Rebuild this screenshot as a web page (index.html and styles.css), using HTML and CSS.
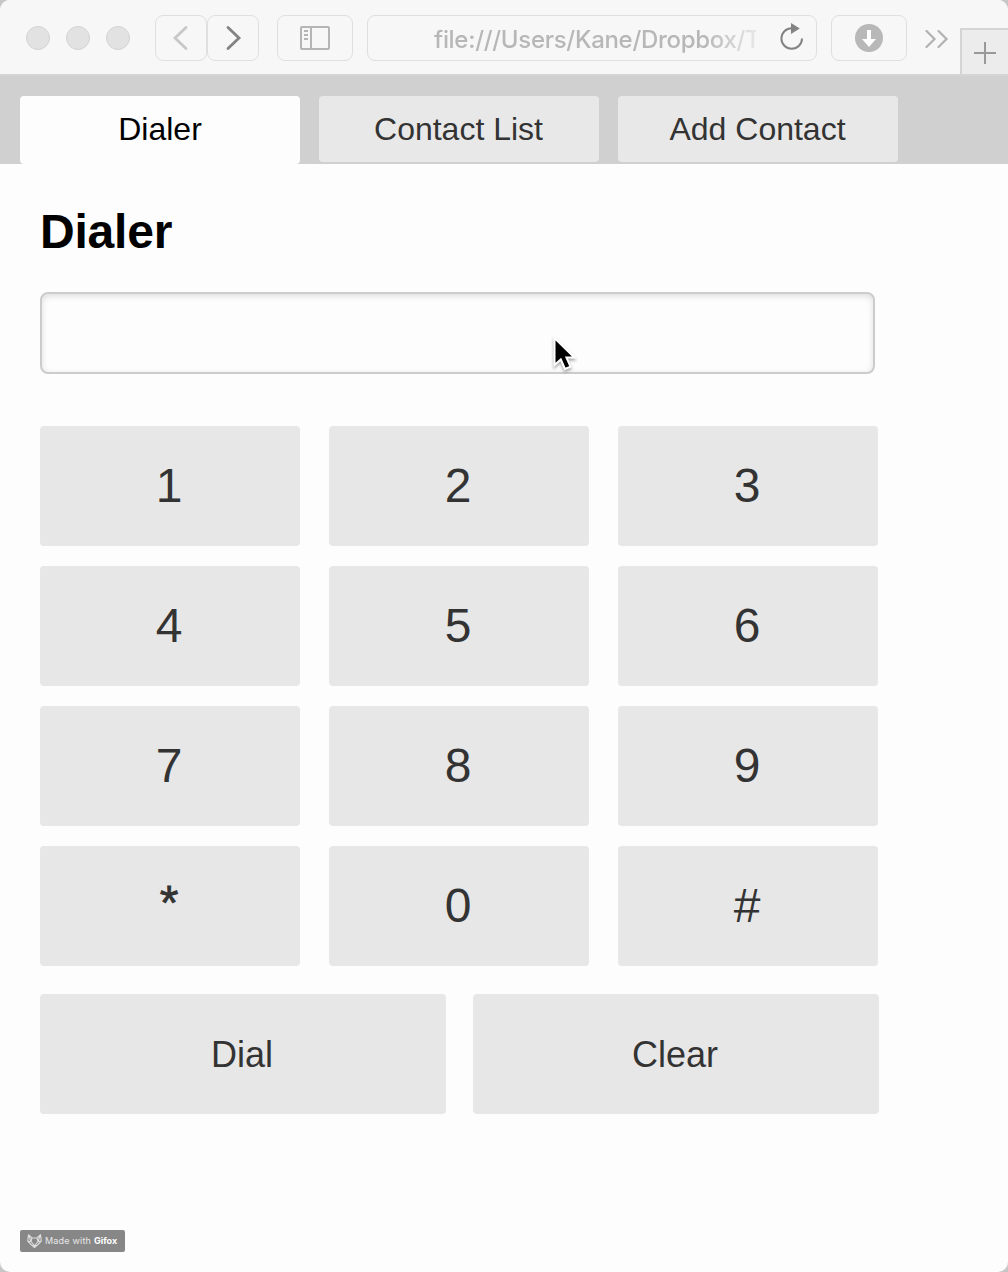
FILE: index.html
```html
<!DOCTYPE html>
<html lang="en">
<head>
<meta charset="utf-8">
<title>Dialer</title>
<link rel="stylesheet" href="styles.css">
</head>
<body>
<div class="window">
  <header class="toolbar">
    <div class="lights"><span class="light"></span><span class="light"></span><span class="light"></span></div>
    <div class="nav">
      <div class="tool nav-button">
        <svg width="52" height="46" viewBox="0 0 52 46"><path d="M31 12.500 20 23 31 33.500" fill="none" stroke="#c8c8c8" stroke-width="2.8" stroke-linecap="round"/></svg>
      </div>
      <div class="tool nav-button">
        <svg width="52" height="46" viewBox="0 0 52 46"><path d="M21 12.500 32 23 21 33.500" fill="none" stroke="#838383" stroke-width="2.8" stroke-linecap="round"/></svg>
      </div>
    </div>
    <div class="tool sidebar-button">
      <svg width="30" height="24" viewBox="0 0 30 24" fill="none" stroke="#b5b5b5"><rect x="1" y="1" width="28" height="22" rx="1" stroke-width="2"/><path d="M11 1v22" stroke-width="2"/><path d="M4 5h4M4 9h4M4 13h4" stroke-width="1.800"/></svg>
    </div>
    <div class="tool address">
      <span class="url">file:///Users/Kane/Dropbox/T</span>
      <svg class="reload" width="24" height="28" viewBox="0 0 24 28"><path d="M22 15.500a10.300 10.300 0 1 1-10.300-10.300" fill="none" stroke="#838383" stroke-width="2"/><path d="M11 0v11l8.800-5.500z" fill="#838383"/></svg>
    </div>
    <div class="tool download">
      <svg width="28" height="28" viewBox="0 0 28 28"><circle cx="14" cy="14" r="14" fill="#b8b8b8"/><path d="M12 6h4v9h5l-7 8-7-8h5z" fill="#fff"/></svg>
    </div>
    <svg class="more" width="24" height="18" viewBox="0 0 24 18" fill="none" stroke="#b2b2b2" stroke-width="2.200" stroke-linecap="round"><path d="M1.500 1 9.500 9 1.500 17M13.500 1 21.500 9 13.500 17"/></svg>
    <div class="new-tab">
      <svg width="22" height="22" viewBox="0 0 22 22"><path d="M11 0v22M0 11h22" stroke="#999" stroke-width="2"/></svg>
    </div>
  </header>
  <nav class="tabs">
    <a class="tab active">Dialer</a>
    <a class="tab">Contact List</a>
    <a class="tab">Add Contact</a>
  </nav>
  <main class="dialer">
    <h1 class="title">Dialer</h1>
    <input class="number" type="text" aria-label="Number">
    <div class="keys">
      <button class="key">1</button><button class="key">2</button><button class="key">3</button>
      <button class="key">4</button><button class="key">5</button><button class="key">6</button>
      <button class="key">7</button><button class="key">8</button><button class="key">9</button>
      <button class="key star">*</button><button class="key">0</button><button class="key">#</button>
    </div>
    <div class="actions"><button class="key action">Dial</button><button class="key action">Clear</button></div>
  </main>
  <footer class="badge">
    <svg width="15" height="14" viewBox="0 0 15 14" fill="none" stroke="#dcdcdc" stroke-width="1.100" stroke-linejoin="round"><path d="M1.500.7 5 4h5L13.500.7l.8 6.300-3.300 3.500-3.500 3-3.500-3L.7 7zM1.500.7 4 7.500l-3.300-.5M13.500.7 11 7.500l3.300-.5M4 7.500l2.500 3M11 7.500l-2.500 3M5 4l-1 3.500M10 4l1 3.500"/><path d="M6 11h3l-1.500 2z" fill="#fff"/></svg>
    <span class="made">Made with</span><b class="brand">Gifox</b>
  </footer>
  <svg class="cursor" width="28" height="40" viewBox="0 0 28 40"><path d="M4.500 2v27l6.300-5.500 4.200 9.500 5.500-2.300-4.100-9.200h8z" fill="#000" stroke="#fff" stroke-width="2"/></svg>
</div>
</body>
</html>
```
FILE: styles.css
```css
* { box-sizing: border-box; }
body { margin: 0; background: #c6c6c6; font-family: "Liberation Sans", Arial, sans-serif; }
svg { display: block; flex: none; }
.window {
  position: relative;
  display: flex;
  flex-direction: column;
  height: 1272px;
  overflow: hidden;
  background: #fdfdfd;
  border-radius: 10px;
}
.toolbar {
  display: flex;
  align-items: flex-start;
  height: 76px;
  padding: 15px 0 0 26px;
  background: #f7f7f7;
  border-bottom: 2px solid #d5d5d5;
}
.lights { display: flex; gap: 16px; margin: 11px 25px 0 0; }
.light { width: 24px; height: 24px; background: #e2e2e2; border: 1px solid #d3d3d3; border-radius: 50%; }
.tool {
  display: flex;
  flex: none;
  align-items: center;
  justify-content: center;
  height: 46px;
  border: 1.5px solid #dfdfdf;
  border-radius: 8px;
}
.nav { display: flex; width: 104px; margin-right: 18px; }
.nav-button { width: 52px; }
.nav-button svg { margin: -1px; }
.sidebar-button { width: 76px; margin-right: 14px; }
.address { justify-content: flex-start; width: 450px; margin-right: 14px; padding: 0 12px 0 66px; }
.url {
  width: 322px;
  padding-top: 3px;
  color: #b7b7b7;
  font: 450 24px/32px Inter, sans-serif;
  white-space: nowrap;
  letter-spacing: -0.3px;
  -webkit-mask-image: linear-gradient(90deg, #000 84%, rgba(0, 0, 0, .25));
  mask-image: linear-gradient(90deg, #000 84%, rgba(0, 0, 0, .25));
}
.reload { margin: -3px 0 0 24px; }
.download { width: 76px; margin-right: 18px; }
.more { margin: 15px 11px 0 0; }
.new-tab {
  display: flex;
  flex: 1;
  align-items: center;
  justify-content: center;
  height: 46px;
  margin-top: 13px;
  background: #ececec;
  border: solid #d5d5d5;
  border-width: 2px 0 0 2px;
}
.new-tab svg { margin-top: 2px; }
.tabs { display: flex; gap: 19px; height: 88px; padding: 20px 20px 0; background: #d0d0d0; }
.tab {
  width: 280px;
  height: 66px;
  padding-right: 1px;
  border-radius: 4px;
  background: #e8e8e8;
  color: #333;
  font-size: 32px;
  line-height: 66px;
  text-align: center;
}
.tab.active { height: 68px; padding-right: 0; background: #fdfdfd; color: #000; }
.dialer { width: 919px; padding: 41px 40px 0; }
.title { margin: 0 0 33px; font-size: 48px; line-height: 54px; letter-spacing: -.2px; color: #000; }
.number {
  display: block;
  width: 835px;
  height: 82px;
  padding: 0 16px;
  border: 2px solid #ccc;
  border-radius: 8px;
  background: #fdfdfd;
  box-shadow: inset 0 2px 6px #ddd;
  font: 32px "Liberation Sans", sans-serif;
}
.keys { display: grid; grid-template-columns: repeat(3, 260px); gap: 20px 29px; margin-top: 52px; }
.key {
  height: 120px;
  padding: 0 2px 2px 0;
  border: 0;
  border-radius: 4px;
  background: #e7e7e7;
  color: #333;
  font: 48px "Liberation Sans", Arial, sans-serif;
}
.star { padding-bottom: 8px; -webkit-text-stroke: .8px #333; }
.actions { display: flex; gap: 27px; margin-top: 28px; }
.action { width: 406px; padding: 2px 2px 0 0; font-size: 36px; }
.badge {
  display: flex;
  align-items: center;
  width: 105px;
  height: 22px;
  margin: auto 0 20px 20px;
  padding-left: 7px;
  border-radius: 2px;
  background: #878787;
  color: #e8e8e8;
  font: 9px/22px Inter, sans-serif;
  white-space: nowrap;
}
.made { width: 46px; margin: 0 3px; letter-spacing: .2px; }
.brand { color: #fff; }
.cursor { position: absolute; left: 550px; top: 336px; filter: drop-shadow(0 2px 1.5px rgba(0, 0, 0, .35)); }
```
